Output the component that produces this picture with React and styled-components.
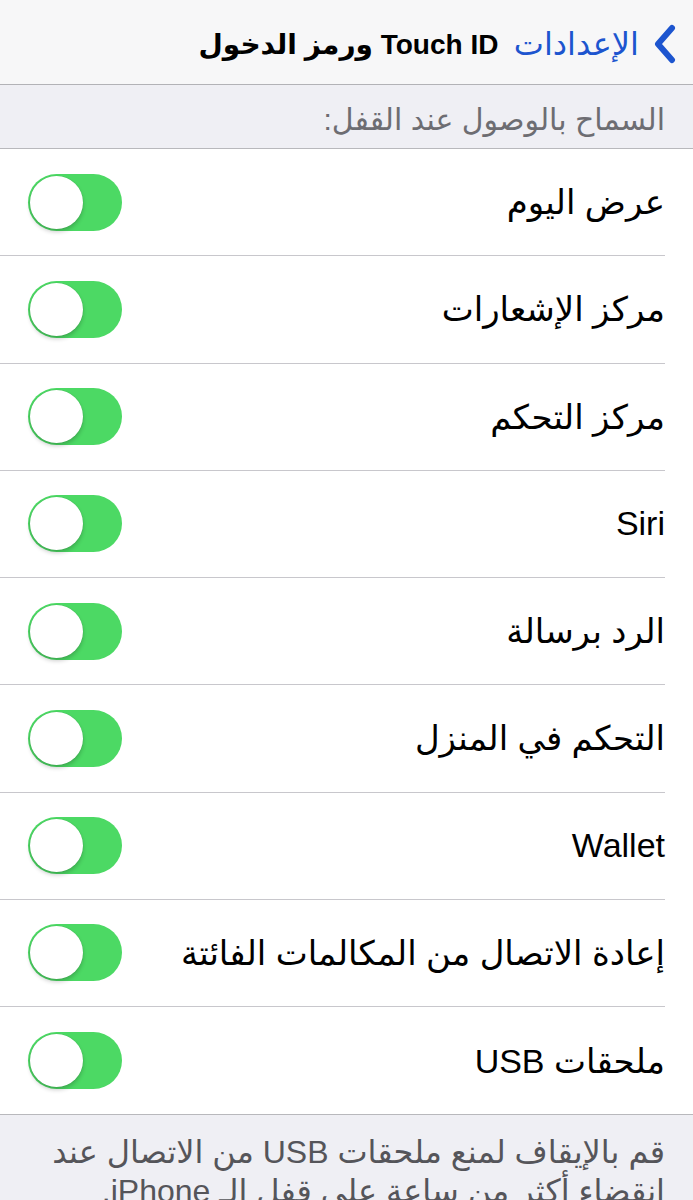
import React from "react";
import styled, { createGlobalStyle } from "styled-components";

const Global = createGlobalStyle`
  html, body { margin: 0; padding: 0; background: #ffffff; }
  body { font-family: "Liberation Sans", "DejaVu Sans", sans-serif; }
  * { box-sizing: border-box; }
`;

const Page = styled.div`
  direction: rtl;
  width: 693px;
  height: 1200px;
  overflow: hidden;
  background: #efeff4;
  display: flex;
  flex-direction: column;
`;

const NavBar = styled.div`
  height: 85px;
  flex: none;
  background: #f7f7f8;
  border-bottom: 1px solid #b2b2b6;
  position: relative;
  display: flex;
  align-items: center;
  justify-content: center;
`;

const Back = styled.div`
  position: absolute;
  right: 16px;
  top: 24px;
  display: flex;
  align-items: center;
  gap: 14px;
  color: #1d55cf;
  font-size: 32px;
  line-height: 40px;
`;

const Title = styled.div`
  font-size: 28px;
  font-weight: bold;
  color: #000;
  margin-top: 4px;
  margin-left: 4px;
`;

const SectionHeader = styled.div`
  height: 64px;
  flex: none;
  border-bottom: 1px solid #b8b8bc;
  padding: 6px 28px 0;
  display: flex;
  align-items: center;
  color: #6d6d72;
  font-size: 30px;
`;

const List = styled.div`
  background: #fff;
  border-bottom: 1px solid #b8b8bc;
  flex: none;
`;

const Row = styled.div`
  padding-right: 28px;
`;

const RowInner = styled.div`
  height: 107.25px;
  display: flex;
  align-items: center;
  justify-content: space-between;
  padding-left: 28px;
  border-bottom: ${(p) => (p.$last ? "none" : "1px solid #c8c7cc")};
`;

const Label = styled.div`
  font-size: 34px;
  color: #000;
`;

const Track = styled.div`
  width: 94px;
  height: 57px;
  border-radius: 29px;
  background: #4cd964;
  position: relative;
  flex: none;
`;

const Knob = styled.div`
  position: absolute;
  left: 2px;
  top: 2px;
  width: 53px;
  height: 53px;
  border-radius: 50%;
  background: #fff;
  box-shadow: 0 3px 4px rgba(0, 0, 0, 0.2), 0 0 0 0.5px rgba(0, 0, 0, 0.08);
`;

const Footer = styled.div`
  padding: 18px 28px 0;
  color: #55555a;
  font-size: 32px;
  line-height: 39px;
  white-space: nowrap;
`;

const Toggle = () => (
  <Track>
    <Knob />
  </Track>
);

const items = [
  "عرض اليوم",
  "مركز الإشعارات",
  "مركز التحكم",
  "Siri",
  "الرد برسالة",
  "التحكم في المنزل",
  "Wallet",
  "إعادة الاتصال من المكالمات الفائتة",
  "ملحقات USB",
];

export default function App() {
  return (
    <Page>
      <Global />
      <NavBar>
        <Back>
          <svg width="24" height="40" viewBox="0 0 24 40">
            <path d="M19 4 L5 20 L19 36" fill="none" stroke="#1d55cf" strokeWidth="6" strokeLinecap="round" strokeLinejoin="round" />
          </svg>
          <span>الإعدادات</span>
        </Back>
        <Title>Touch ID ورمز الدخول</Title>
      </NavBar>
      <SectionHeader>السماح بالوصول عند القفل:</SectionHeader>
      <List>
        {items.map((t, i) => (
          <Row key={t}>
            <RowInner $last={i === items.length - 1}>
              <Label>{t}</Label>
              <Toggle />
            </RowInner>
          </Row>
        ))}
      </List>
      <Footer>
        قم بالإيقاف لمنع ملحقات USB من الاتصال عند
        <br />
        انقضاء أكثر من ساعة على قفل الـ iPhone.
      </Footer>
    </Page>
  );
}
